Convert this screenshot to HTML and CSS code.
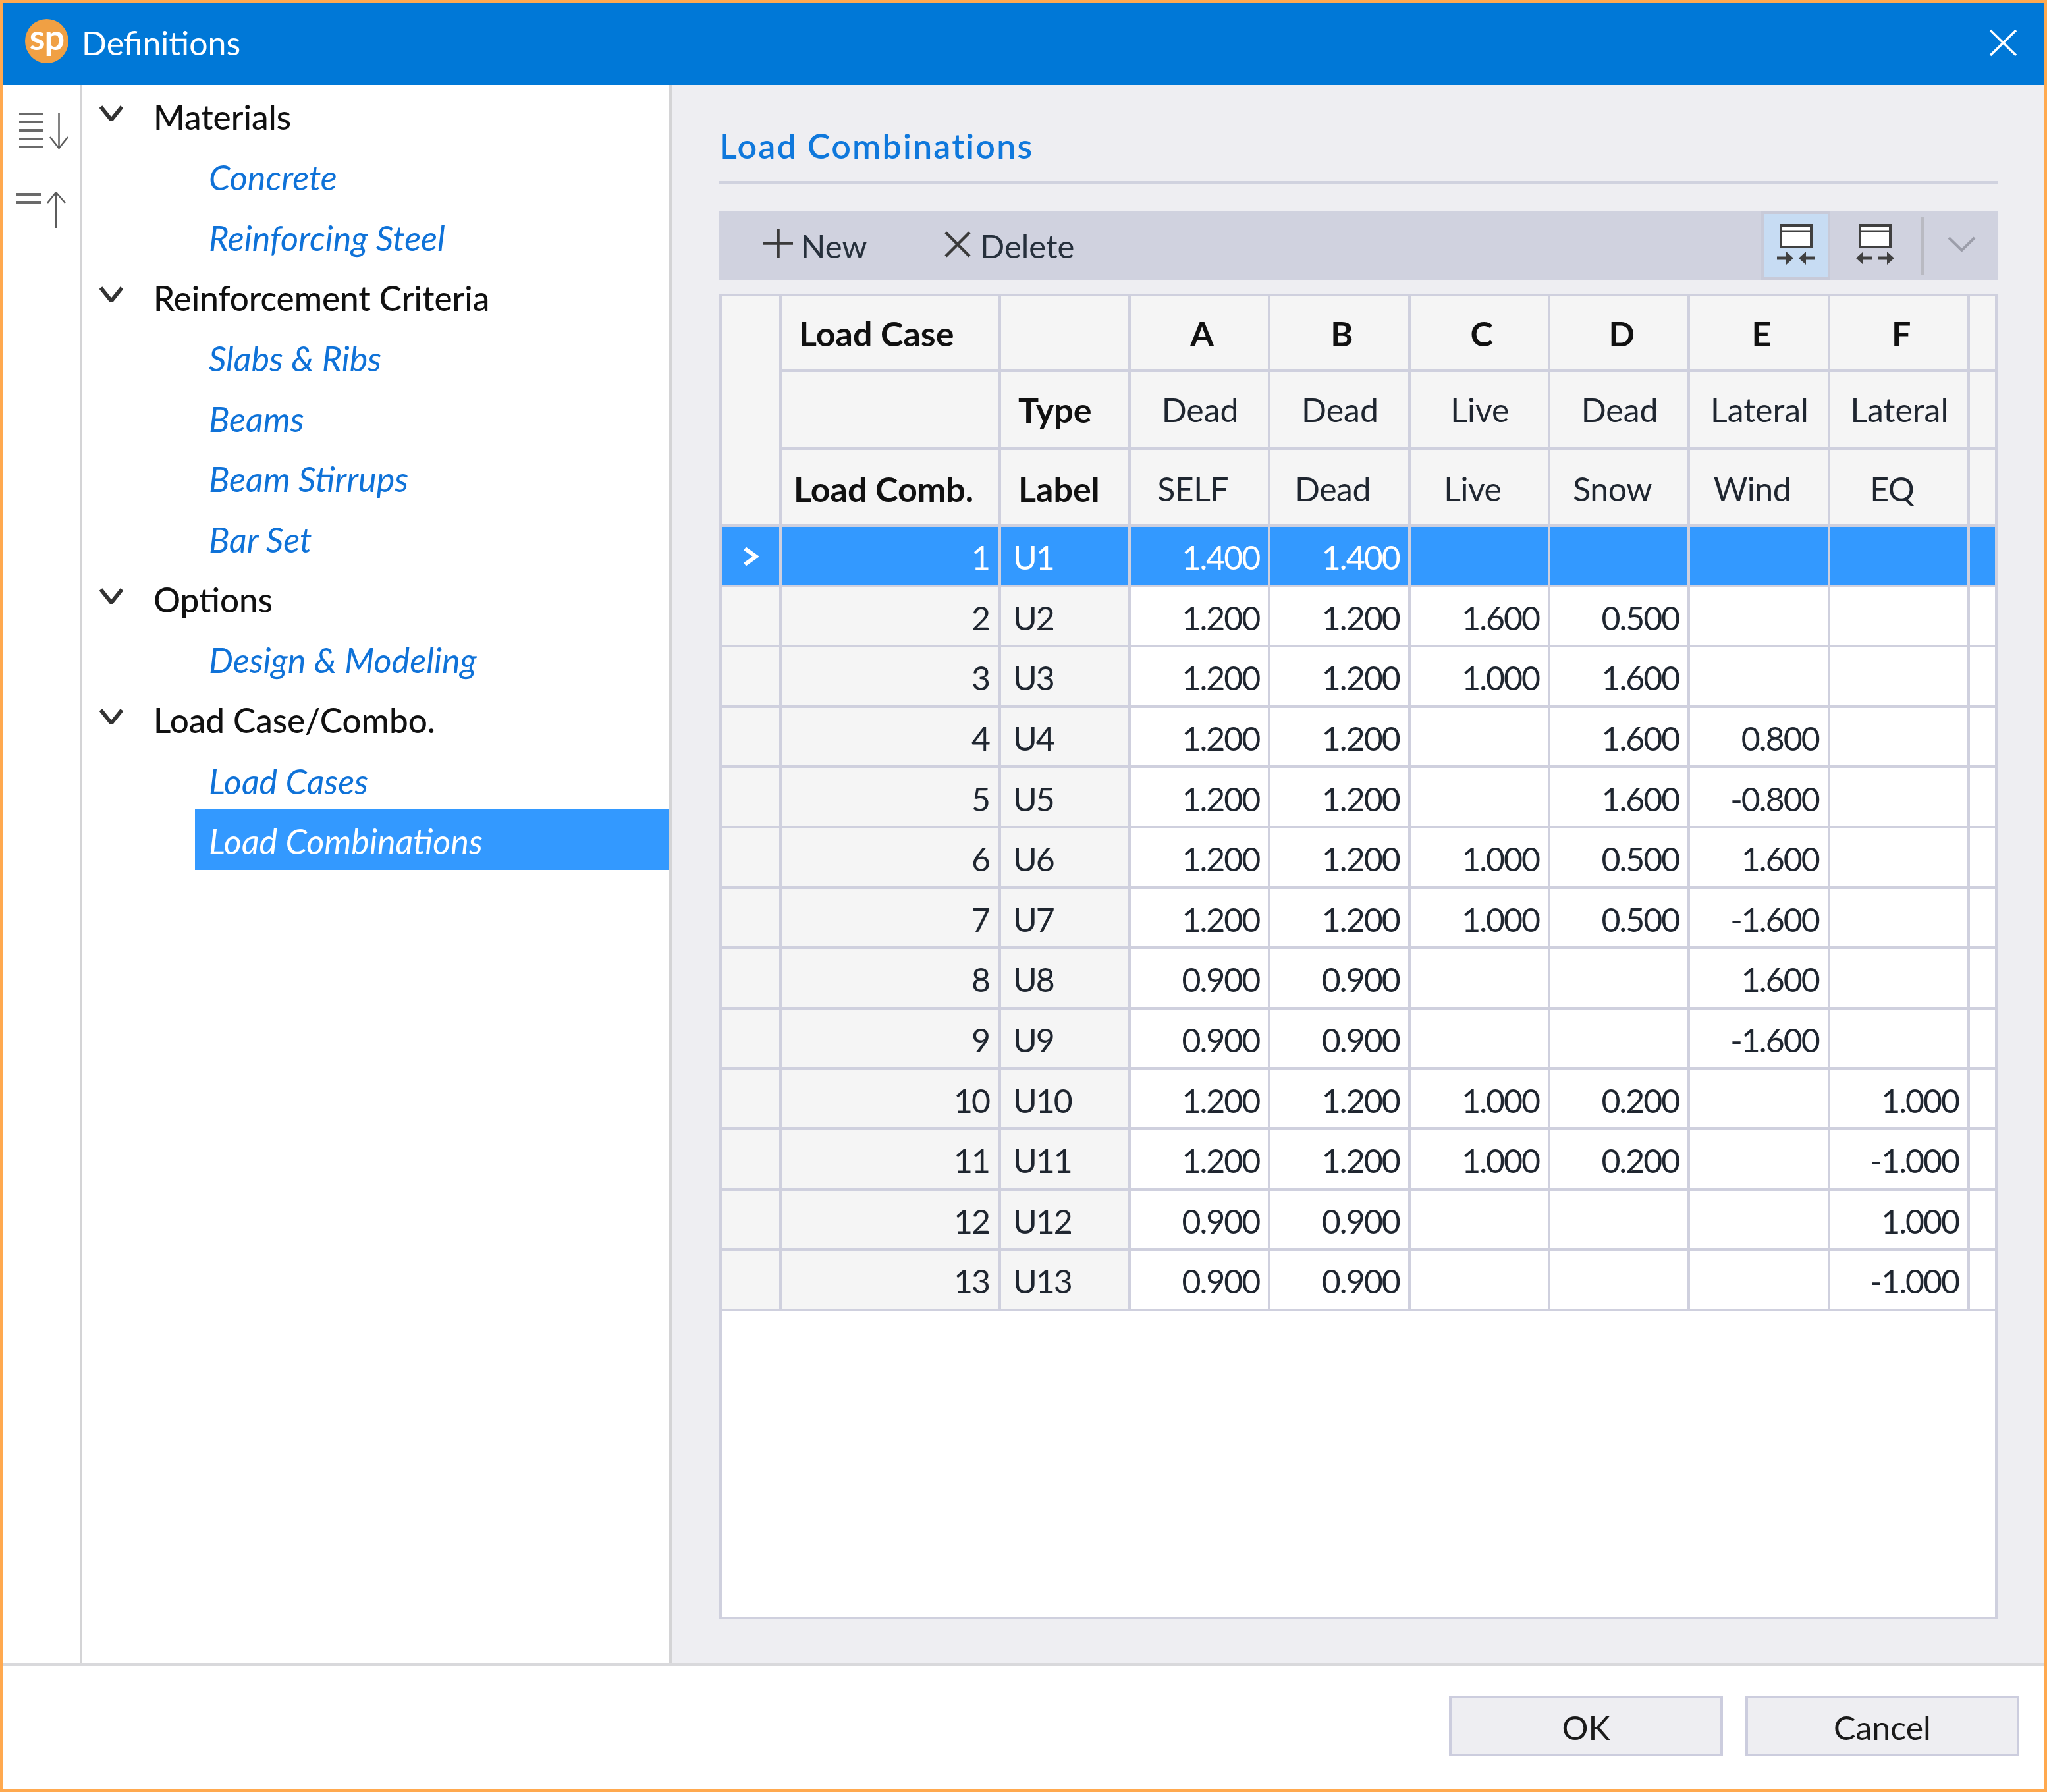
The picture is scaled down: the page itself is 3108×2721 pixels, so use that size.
FILE: index.html
```html
<!DOCTYPE html>
<html lang="en">
<head>
<meta charset="utf-8">
<title>Definitions</title>
<link rel="stylesheet" href="styles.css">
</head>
<body>
<div class="window">
  <header class="titlebar">
    <div class="logo">sp</div>
    <div class="title">Definitions</div>
    <svg class="close" viewBox="0 0 43 42"><path d="M2 2L41 40M41 2L2 40"/></svg>
  </header>
  <main class="main">
    <aside class="rail">
      <svg class="rail-icon-a" viewBox="0 0 90 56"><path class="bars" d="M9 2H46M9 14H46M9 27H46M9 40H46M9 52H46"/><path class="arrow" d="M69.500 0V54M56 37L69.500 54L83 37"/></svg>
      <svg class="rail-icon-b" viewBox="0 0 90 56"><path class="bars" d="M5 3H42M5 15H42"/><path class="arrow" d="M65 54V0M52 16L65 0L79 16"/></svg>
    </aside>
    <nav class="tree">
      <div class="node"><svg class="chev" viewBox="0 0 36 24"><path d="M2 2L18 22L34 2"/></svg><span>Materials</span></div>
      <div class="leaf"><span>Concrete</span></div>
      <div class="leaf"><span>Reinforcing Steel</span></div>
      <div class="node"><svg class="chev" viewBox="0 0 36 24"><path d="M2 2L18 22L34 2"/></svg><span>Reinforcement Criteria</span></div>
      <div class="leaf"><span>Slabs &amp; Ribs</span></div>
      <div class="leaf"><span>Beams</span></div>
      <div class="leaf"><span>Beam Stirrups</span></div>
      <div class="leaf"><span>Bar Set</span></div>
      <div class="node"><svg class="chev" viewBox="0 0 36 24"><path d="M2 2L18 22L34 2"/></svg><span>Options</span></div>
      <div class="leaf"><span>Design &amp; Modeling</span></div>
      <div class="node"><svg class="chev" viewBox="0 0 36 24"><path d="M2 2L18 22L34 2"/></svg><span>Load Case/Combo.</span></div>
      <div class="leaf"><span>Load Cases</span></div>
      <div class="leaf selected"><span>Load Combinations</span></div>
    </nav>
    <section class="content">
      <h1 class="heading">Load Combinations</h1>
      <div class="toolbar">
        <div class="tool-btn btn-new">
          <svg class="tool-plus" viewBox="0 0 45 45"><path d="M22.500 0V45M0 22.500H45"/></svg>
          <span class="tool-label">New</span>
        </div>
        <div class="tool-btn btn-del">
          <svg class="tool-x" viewBox="0 0 40 40"><path d="M2 2L38 38M38 2L2 38"/></svg>
          <span class="tool-label">Delete</span>
        </div>
        <div class="tool-right">
          <div class="toggle active">
            <svg class="win" viewBox="0 0 64 68"><rect x="9" y="4" width="46" height="33"/><path class="win-line" d="M9 13H55"/><path class="win-arrow" d="M3 54H18M61 54H46"/><path class="win-head" d="M17 44L28 54L17 64ZM47 44L36 54L47 64Z"/></svg>
          </div>
          <div class="toggle plain">
            <svg class="win" viewBox="0 0 64 68"><rect x="9" y="4" width="46" height="33"/><path class="win-line" d="M9 13H55"/><path class="win-arrow" d="M28 54H13M36 54H51"/><path class="win-head" d="M14 44L3 54L14 64ZM50 44L61 54L50 64Z"/></svg>
          </div>
          <div class="tool-sep"></div>
          <svg class="tool-chev" viewBox="0 0 43 23"><path d="M2 2L21.500 21L41 2"/></svg>
        </div>
      </div>
      <div class="grid-wrap">
        <table class="grid">
          <colgroup><col class="c-sel"><col class="c-num"><col class="c-lab"><col class="c-val"><col class="c-val"><col class="c-val"><col class="c-val"><col class="c-val"><col class="c-val"><col class="c-end"></colgroup>
          <thead>
            <tr class="h1">
              <th class="hd" rowspan="3"></th>
              <th class="hd left-case">Load Case</th>
              <th class="hd"></th>
              <th class="hd case">A</th><th class="hd case">B</th><th class="hd case">C</th><th class="hd case">D</th><th class="hd case">E</th><th class="hd case">F</th>
              <th class="hd"></th>
            </tr>
            <tr class="h2">
              <th class="hd"></th>
              <th class="hd left-lab">Type</th>
              <td class="hd mid">Dead</td><td class="hd mid">Dead</td><td class="hd mid">Live</td><td class="hd mid">Dead</td><td class="hd mid">Lateral</td><td class="hd mid">Lateral</td>
              <td class="hd"></td>
            </tr>
            <tr class="h3">
              <th class="hd left-comb">Load Comb.</th>
              <th class="hd left-lab">Label</th>
              <td class="hd low">SELF</td><td class="hd low">Dead</td><td class="hd low">Live</td><td class="hd low">Snow</td><td class="hd low">Wind</td><td class="hd low">EQ</td>
              <td class="hd"></td>
            </tr>
          </thead>
          <tbody>
            <tr class="row current"><td class="sel"><svg class="marker" viewBox="0 0 24 30"><path d="M3 3L20 15L3 27"/></svg></td><td class="num">1</td><td class="lab">U1</td><td class="val">1.400</td><td class="val">1.400</td><td class="val"></td><td class="val"></td><td class="val"></td><td class="val"></td><td class="end"></td></tr>
            <tr class="row"><td class="sel"></td><td class="num">2</td><td class="lab">U2</td><td class="val">1.200</td><td class="val">1.200</td><td class="val">1.600</td><td class="val">0.500</td><td class="val"></td><td class="val"></td><td class="end"></td></tr>
            <tr class="row"><td class="sel"></td><td class="num">3</td><td class="lab">U3</td><td class="val">1.200</td><td class="val">1.200</td><td class="val">1.000</td><td class="val">1.600</td><td class="val"></td><td class="val"></td><td class="end"></td></tr>
            <tr class="row"><td class="sel"></td><td class="num">4</td><td class="lab">U4</td><td class="val">1.200</td><td class="val">1.200</td><td class="val"></td><td class="val">1.600</td><td class="val">0.800</td><td class="val"></td><td class="end"></td></tr>
            <tr class="row"><td class="sel"></td><td class="num">5</td><td class="lab">U5</td><td class="val">1.200</td><td class="val">1.200</td><td class="val"></td><td class="val">1.600</td><td class="val">-0.800</td><td class="val"></td><td class="end"></td></tr>
            <tr class="row"><td class="sel"></td><td class="num">6</td><td class="lab">U6</td><td class="val">1.200</td><td class="val">1.200</td><td class="val">1.000</td><td class="val">0.500</td><td class="val">1.600</td><td class="val"></td><td class="end"></td></tr>
            <tr class="row"><td class="sel"></td><td class="num">7</td><td class="lab">U7</td><td class="val">1.200</td><td class="val">1.200</td><td class="val">1.000</td><td class="val">0.500</td><td class="val">-1.600</td><td class="val"></td><td class="end"></td></tr>
            <tr class="row"><td class="sel"></td><td class="num">8</td><td class="lab">U8</td><td class="val">0.900</td><td class="val">0.900</td><td class="val"></td><td class="val"></td><td class="val">1.600</td><td class="val"></td><td class="end"></td></tr>
            <tr class="row"><td class="sel"></td><td class="num">9</td><td class="lab">U9</td><td class="val">0.900</td><td class="val">0.900</td><td class="val"></td><td class="val"></td><td class="val">-1.600</td><td class="val"></td><td class="end"></td></tr>
            <tr class="row"><td class="sel"></td><td class="num">10</td><td class="lab">U10</td><td class="val">1.200</td><td class="val">1.200</td><td class="val">1.000</td><td class="val">0.200</td><td class="val"></td><td class="val">1.000</td><td class="end"></td></tr>
            <tr class="row"><td class="sel"></td><td class="num">11</td><td class="lab">U11</td><td class="val">1.200</td><td class="val">1.200</td><td class="val">1.000</td><td class="val">0.200</td><td class="val"></td><td class="val">-1.000</td><td class="end"></td></tr>
            <tr class="row"><td class="sel"></td><td class="num">12</td><td class="lab">U12</td><td class="val">0.900</td><td class="val">0.900</td><td class="val"></td><td class="val"></td><td class="val"></td><td class="val">1.000</td><td class="end"></td></tr>
            <tr class="row"><td class="sel"></td><td class="num">13</td><td class="lab">U13</td><td class="val">0.900</td><td class="val">0.900</td><td class="val"></td><td class="val"></td><td class="val"></td><td class="val">-1.000</td><td class="end"></td></tr>
          </tbody>
        </table>
      </div>
    </section>
  </main>
  <footer class="footer">
    <button class="btn">OK</button>
    <button class="btn">Cancel</button>
  </footer>
</div>
</body>
</html>
```

FILE: styles.css
```css
* { box-sizing: border-box; }
html, body { margin: 0; padding: 0; }
body { width: 3108px; height: 2721px; font-family: "Lato", "Open Sans", sans-serif; color: #1a1a1a; background: #fff; }

.window { width: 3108px; height: 2721px; border: 4px solid #ffa94f; display: flex; flex-direction: column; }

.titlebar { height: 125px; flex: none; background: #0078d7; display: flex; align-items: center; color: #fff; }
.logo { width: 66px; height: 67px; margin-left: 34px; margin-top: -8px; border-radius: 50%; background: #f0a044; color: #fff; font-weight: 700; font-size: 54px; line-height: 54px; text-align: center; letter-spacing: -1px; }
.title { margin-left: 20px; font-size: 50px; margin-top: -3px; }
.close { width: 43px; height: 42px; margin-left: auto; margin-right: 41px; margin-top: -4px; }
.close path { stroke: #fff; stroke-width: 3.500; fill: none; }

.main { flex: 1; display: flex; min-height: 0; border-bottom: 4px solid #d9d9dc; }

.rail { width: 121px; flex: none; background: #fff; border-right: 4px solid #d4d4d6; padding-top: 42px; }
.rail svg { display: block; width: 90px; height: 56px; margin-left: 16px; fill: none; }
.rail-icon-b { margin-top: 65px; }
.bars { stroke: #6a6a6a; stroke-width: 4; }
.arrow { stroke: #5c5c5c; stroke-width: 2.500; }

.tree { width: 895px; flex: none; background: #fff; border-right: 4px solid #d4d4d6; }
.node, .leaf { height: 91.670px; display: flex; align-items: center; white-space: nowrap; }
.node span, .leaf span { position: relative; top: 2px; }
.node { padding-left: 26px; color: #111; font-size: 51.200px; font-weight: 500; }
.chev { width: 36px; height: 24px; margin-right: 46px; margin-top: -6px; fill: none; }
.chev path { stroke: #333; stroke-width: 6; }
.leaf { margin-left: 171px; padding-left: 21px; color: #0f72d8; font-style: italic; font-size: 52.200px; }
.leaf.selected { background: #3399ff; color: #fff; }

.content { flex: 1; min-width: 0; background: #eeeef2; padding: 0 71px 66px 72px; display: flex; flex-direction: column; }
.heading { margin: 0; height: 150px; flex: none; padding-top: 62px; border-bottom: 4px solid #d0d2df; font-size: 52px; line-height: 60px; font-weight: 600; letter-spacing: 2.150px; color: #0f78dc; }

.toolbar { height: 104px; margin-top: 42px; flex: none; background: #d0d2df; display: flex; align-items: center; padding-left: 67px; }
.tool-btn { display: flex; align-items: center; }
.btn-new { width: 275px; }
.tool-plus { width: 45px; height: 45px; margin-right: 12px; fill: none; margin-top: -8px; }
.tool-x { width: 40px; height: 40px; margin-right: 14px; fill: none; margin-top: -4px; }
.tool-plus path, .tool-x path { stroke: #3a3a3a; stroke-width: 4.500; }
.tool-label { font-size: 49px; color: #26303c; }
.tool-right { margin-left: auto; height: 100%; display: flex; align-items: center; }
.toggle { width: 105px; height: 100%; display: flex; align-items: center; justify-content: center; }
.toggle.active { background: #c7dcf3; border: 4px solid #c8cad8; }
.toggle.plain { margin-left: 15px; }
.win { width: 64px; height: 68px; fill: none; margin-top: -2px; }
.win rect { fill: #fff; stroke: #404040; stroke-width: 4; }
.win-line { stroke: #404040; stroke-width: 3; }
.win-arrow { stroke: #404040; stroke-width: 5; }
.win-head { fill: #404040; }
.tool-sep { width: 4px; height: 88px; margin-left: 18px; background: #b9bac2; }
.tool-chev { width: 43px; height: 23px; margin-left: 36px; margin-right: 33px; fill: none; margin-top: -6px; }
.tool-chev path { stroke: #9c9eaa; stroke-width: 4; }

.grid-wrap { margin-top: 21px; flex: 1; min-height: 0; background: #fff; border: 4px solid #cfd0de; }
.grid { width: 1933px; table-layout: fixed; border-collapse: separate; border-spacing: 0; font-size: 50px; }
.c-sel { width: 91px; }
.c-num { width: 333px; }
.c-lab { width: 197px; }
.c-val { width: 212.330px; }
.c-end { width: 38px; }
.grid th, .grid td { padding: 0; border-right: 4px solid #cfd0de; border-bottom: 4px solid #cfd0de; white-space: nowrap; overflow: hidden; }
.grid tr > :last-child { border-right: 0; }
.grid .hd { background: #f5f5f5; }
.h1 > * { height: 115px; }
.h2 > * { height: 118px; }
.h3 > * { height: 117px; }
.grid th { font-weight: 700; font-size: 52px; color: #111; text-align: left; }
.grid th.left-case { padding-left: 26px; }
.grid th.left-lab { padding-left: 26px; }
.grid th.left-comb { padding-left: 18px; }
.grid th.case { text-align: center; padding-left: 8px; }
.grid .mid { text-align: center; padding-left: 2px; color: #1f2630; }
.grid .low { text-align: center; padding-right: 20px; padding-top: 5px; letter-spacing: -0.500px; color: #1f2630; }
.h3 th { padding-top: 5px; }
.row > * { height: 91.600px; color: #1f2630; line-height: 60px; padding-top: 5px !important; letter-spacing: -2px; }
.grid .sel, .grid .num, .grid .lab { background: #f5f5f5; }
.grid .num { text-align: right; padding-right: 14px; }
.grid .lab { padding-left: 18px; }
.grid .val { text-align: right; padding-right: 13px; background: #fff; }
.grid .end { background: #fff; }
.row.current > * { background: #3399ff !important; color: #fff; }
.marker { display: block; width: 24px; height: 30px; margin: -2px auto 0; fill: none; }
.marker path { stroke: #fff; stroke-width: 6; }

.footer { height: 188px; flex: none; background: #fff; display: flex; justify-content: flex-end; align-items: flex-start; gap: 34px; padding: 46px 38px 0 0; }
.btn { width: 416px; height: 92px; border: 4px solid #cccdde; background: #eeeef2; font-family: inherit; font-size: 50px; line-height: 60px; color: #1a1a1a; padding: 3px 0 0; }
```
